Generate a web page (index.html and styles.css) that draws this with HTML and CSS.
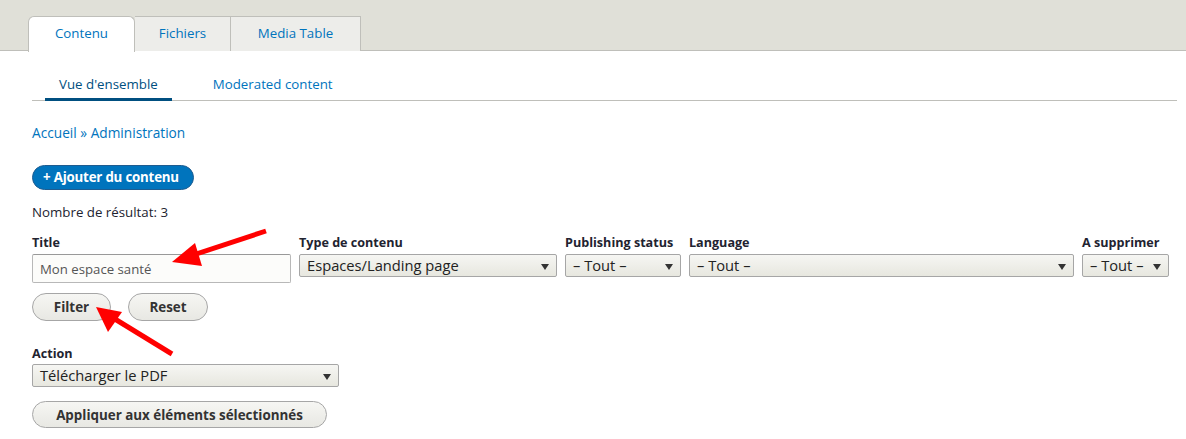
FILE: index.html
```html
<!DOCTYPE html>
<html lang="fr">
<head>
<meta charset="utf-8">
<title>Contenu</title>
<link rel="stylesheet" href="styles.css">
</head>
<body>
<header class="top">
  <ul class="tabs">
    <li class="tab active"><a href="#">Contenu</a></li>
    <li class="tab"><a href="#">Fichiers</a></li>
    <li class="tab"><a href="#">Media Table</a></li>
  </ul>
</header>
<main class="content">
  <ul class="subtabs">
    <li class="subtab active"><a href="#">Vue d'ensemble</a></li>
    <li class="subtab"><a href="#">Moderated content</a></li>
  </ul>
  <nav class="breadcrumb"><a href="#">Accueil</a> » <a href="#">Administration</a></nav>
  <a class="btn-primary" href="#">+ Ajouter du contenu</a>
  <p class="count">Nombre de résultat: 3</p>
  <form class="filters">
    <div class="fields">
      <div class="field f-title">
        <label>Title</label>
        <input class="text" type="text" value="Mon espace santé">
      </div>
      <div class="field f-type">
        <label>Type de contenu</label>
        <div class="select">Espaces/Landing page</div>
      </div>
      <div class="field f-status">
        <label>Publishing status</label>
        <div class="select">– Tout –</div>
      </div>
      <div class="field f-lang">
        <label>Language</label>
        <div class="select">– Tout –</div>
      </div>
      <div class="field f-del">
        <label>A supprimer</label>
        <div class="select">– Tout –</div>
      </div>
    </div>
    <div class="actions">
      <button type="button" class="btn btn-filter">Filter</button>
      <button type="button" class="btn btn-reset">Reset</button>
    </div>
  </form>
  <div class="bulk">
    <label>Action</label>
    <div class="select select-action">Télécharger le PDF</div>
    <button type="button" class="btn btn-apply">Appliquer aux éléments sélectionnés</button>
  </div>
</main>
<svg class="annot" width="1186" height="439" viewBox="0 0 1186 439">
  <g stroke="#f00" stroke-width="5" stroke-linecap="butt" fill="#f00">
    <line x1="266" y1="231" x2="190" y2="256"/>
    <polygon points="172,262 195,243 202,266" stroke="none"/>
    <line x1="172" y1="354" x2="110" y2="316"/>
    <polygon points="96,307 122,312 108,332" stroke="none"/>
  </g>
</svg>
</body>
</html>
```
FILE: styles.css
```css
* { box-sizing: border-box; }
html, body { margin: 0; padding: 0; background: #fff; }
body {
  font-family: "Open Sans", "DejaVu Sans", sans-serif;
  font-size: 13px;
  color: #222330;
  position: relative;
  width: 1186px;
  height: 439px;
  overflow: hidden;
}
a { text-decoration: none; color: #0074bd; }

.top {
  background: #e0e0d8;
  border-bottom: 1px solid #bfbfba;
  height: 51px;
  padding: 16px 0 0 28px;
}
.tabs { list-style: none; margin: 0; padding: 0; display: flex; }
.tab {
  height: 35px;
  background: #ededea;
  border: 1px solid #bfbfba;
  border-bottom: none;
  border-left: none;
  display: flex;
  align-items: center;
  justify-content: center;
  font-size: 13.3px;
}
.tab:nth-child(1) { width: 107px; }
.tab:nth-child(2) { width: 96px; }
.tab:nth-child(3) { width: 130px; }
.tab a { color: #0074bd; padding-bottom: 3px; }
.tab.active {
  background: #fff;
  border-left: 1px solid #bfbfba;
  border-radius: 6px 6px 0 0;
  height: 36px;
  margin-bottom: -1px;
}

.content { padding: 0 9px 0 32px; }
.subtabs {
  list-style: none;
  margin: 0;
  padding: 0 0 0 13px;
  display: flex;
  border-bottom: 1px solid #bfbfba;
  height: 50px;
}
.subtab {
  display: flex;
  align-items: flex-end;
  padding: 0 14px 7px;
  font-size: 13.3px;
  line-height: 18px;
  margin-right: 27px;
  position: relative;
}
.subtab a { color: #0074bd; }
.subtab.active a { color: #004f80; }
.subtab.active::after {
  content: "";
  position: absolute;
  left: 0; right: 0; bottom: -1px;
  height: 3px;
  background: #004f80;
}

.breadcrumb { margin-top: 23px; font-size: 13.7px; color: #0074bd; line-height: 18px; }
.breadcrumb a { color: #0074bd; }

.btn-primary {
  display: inline-block;
  margin-top: 23px;
  background: #0074bd;
  color: #fff;
  font-weight: 700;
  border: 1px solid #1e5c90;
  border-radius: 20px;
  height: 25px;
  line-height: 22px;
  padding: 0 14px 0 10px;
  font-size: 13.3px;
  letter-spacing: -0.2px;
}

.count { margin: 13px 0 0; font-size: 13.3px; line-height: 18px; }

.fields { display: flex; margin-top: 13px; }
.field { display: flex; flex-direction: column; margin-right: 8px; }
.field label {
  font-weight: 700;
  font-size: 12.6px;
  line-height: 17px;
  margin-bottom: 3px;
  color: #222330;
}
.text {
  width: 259px;
  height: 29px;
  font-family: inherit;
  font-size: 13.2px;
  color: #555;
  background: #fcfcfa;
  border: 1px solid #b8b8b8;
  border-top-color: #999;
  border-radius: 2px;
  padding: 0 7px;
  margin: 0;
}
.select {
  position: relative;
  height: 23px;
  line-height: 21px;
  font-size: 14.7px;
  color: #222;
  background: linear-gradient(#f6f6f3, #e7e7df);
  border: 1px solid #a6a6a6;
  border-radius: 2px;
  padding: 0 24px 0 7px;
  white-space: nowrap;
}
.select::after {
  content: "";
  position: absolute;
  right: 7px;
  top: 9px;
  border-left: 4.5px solid transparent;
  border-right: 4.5px solid transparent;
  border-top: 6px solid #333;
}
.f-type .select { width: 258px; }
.f-status .select { width: 116px; }
.f-lang .select { width: 385px; }
.f-del .select { width: 87px; padding-left: 7px; }
.f-del { margin-right: 0; }

.actions { display: flex; gap: 17px; margin-top: 10px; }
.btn {
  font-family: inherit;
  font-weight: 700;
  font-size: 13.4px;
  color: #333;
  background: linear-gradient(#f6f6f3, #e8e8e3);
  border: 1px solid #a6a6a6;
  border-radius: 20px;
  height: 28px;
  padding: 0 16px;
  margin: 0;
}
.btn-filter { width: 79px; }
.btn-reset { width: 80px; }

.bulk { margin-top: 24px; display: flex; flex-direction: column; align-items: flex-start; }
.bulk label { font-weight: 700; font-size: 12.6px; line-height: 17px; margin-bottom: 2px; }
.select-action { width: 307px; }
.btn-apply { margin-top: 14px; width: 295px; height: 27px; padding: 0; }

.annot { position: absolute; left: 0; top: 0; pointer-events: none; }
```
